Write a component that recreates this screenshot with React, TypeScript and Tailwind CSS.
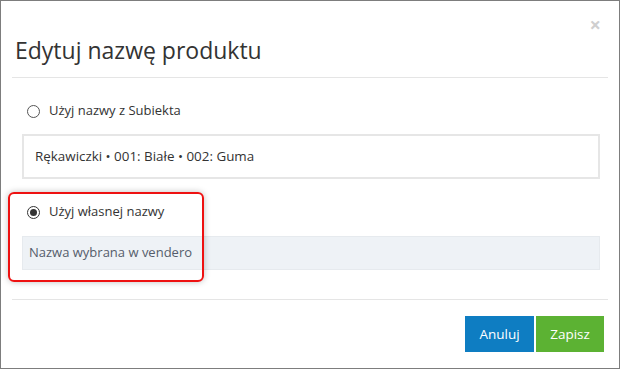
import React from "react";

export default function App() {
  const font = { fontFamily: '"Open Sans", "Noto Sans", sans-serif' };
  return (
    <div className="w-[621px] h-[370px] bg-white" style={font}>
      <div className="relative w-[620px] h-[369px] border border-[#7d7d7d] bg-white flex flex-col">
        {/* header */}
        <div className="relative h-[76px] px-[14px] flex items-end pb-[12px]">
          <h1 className="text-[23px] leading-[30px] text-[#333] font-normal">Edytuj nazwę produktu</h1>
          <span className="absolute right-[18px] top-[14px] text-[20px] leading-[20px] font-bold text-[#cfcfcf]">×</span>
        </div>
        <div className="mx-[11px] h-px bg-[#e5e5e5]" />
        {/* body */}
        <div className="flex flex-col pl-[21px] pr-[19px] pt-[22px]">
          <label className="flex items-center gap-[9px] pl-[5px] h-[22px]">
            <span className="w-[13px] h-[13px] rounded-full border border-[#555] bg-white" />
            <span className="text-[13px] text-[#333]">Użyj nazwy z Subiekta</span>
          </label>
          <div className="mt-[12px] h-[45px] border-2 border-[#e6e6e6] flex items-center px-[11px] text-[13.4px] text-[#333]">
            Rękawiczki • 001: Białe • 002: Guma
          </div>
          <label className="mt-[22px] flex items-center gap-[9px] pl-[5px] h-[22px]">
            <span className="w-[13px] h-[13px] rounded-full border border-[#333] bg-white flex items-center justify-center">
              <span className="w-[7px] h-[7px] rounded-full bg-[#333]" />
            </span>
            <span className="text-[13px] text-[#333]">Użyj własnej nazwy</span>
          </label>
          <div className="mt-[13px] h-[34px] bg-[#eef2f6] border border-[#e6eaee] flex items-center px-[6px] text-[13px] text-[#555d6b]">
            Nazwa wybrana w vendero
          </div>
        </div>
        <div className="mx-[11px] mt-[29px] h-px bg-[#e5e5e5]" />
        {/* footer */}
        <div className="flex justify-end gap-[2px] pr-[15px] pt-[16px]">
          <button className="w-[69px] h-[36px] bg-[#0e7dc2] text-white text-[13.5px]">Anuluj</button>
          <button className="w-[68px] h-[36px] bg-[#5cb233] text-white text-[13.5px]">Zapisz</button>
        </div>
        {/* annotation highlight */}
        <div className="absolute left-[7px] top-[191px] w-[196px] h-[90px] rounded-[6px] border-2 border-[#ee1111] shadow-[0_0_6px_rgba(0,0,0,0.25)]" />
      </div>
    </div>
  );
}
